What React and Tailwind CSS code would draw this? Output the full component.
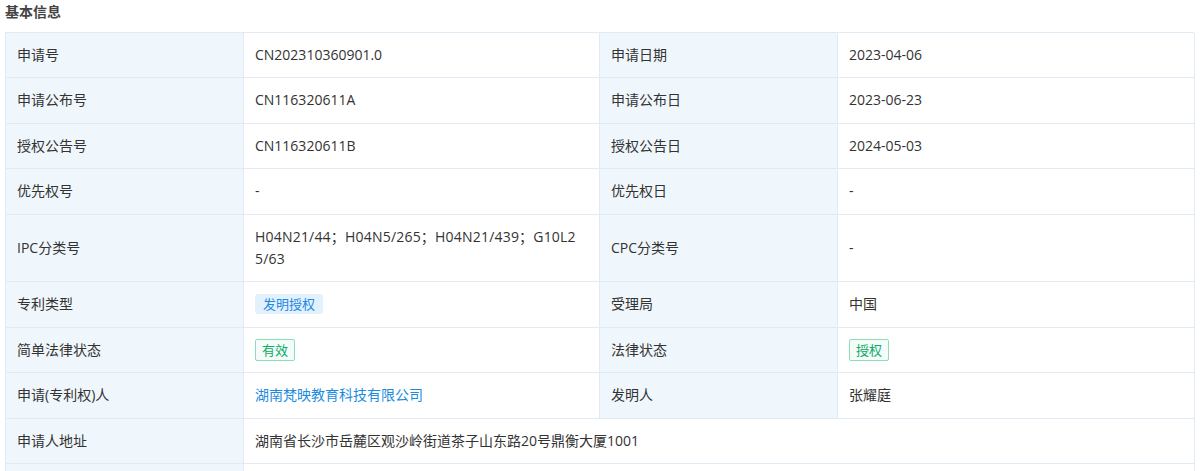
const rows = [
  [["申请号", "CN202310360901.0"], ["申请日期", "2023-04-06"]],
  [["申请公布号", "CN116320611A"], ["申请公布日", "2023-06-23"]],
  [["授权公告号", "CN116320611B"], ["授权公告日", "2024-05-03"]],
  [["优先权号", "-"], ["优先权日", "-"]],
  [["IPC分类号", "lines:H04N21/44；H04N5/265；H04N21/439；G10L2|5/63"], ["CPC分类号", "-"]],
  [["专利类型", "tag-blue:发明授权"], ["受理局", "中国"]],
  [["简单法律状态", "tag-green:有效"], ["法律状态", "tag-green:授权"]],
  [["申请(专利权)人", "link:湖南梵映教育科技有限公司"], ["发明人", "张耀庭"]],
];

function Value({ v }) {
  if (v.startsWith("tag-blue:")) {
    return (
      <span className="inline-block rounded-[3px] bg-[#e3f1fd] px-2 text-[13px] leading-[20px] text-[#1e88e5]">
        {v.slice(9)}
      </span>
    );
  }
  if (v.startsWith("tag-green:")) {
    return (
      <span className="inline-block rounded-[2px] border border-[#8fdcb7] bg-[#f3fcf8] px-[6px] text-[13px] leading-[20px] text-[#0fa968]">
        {v.slice(10)}
      </span>
    );
  }
  if (v.startsWith("link:")) {
    return <span className="text-[#1d8ce0]">{v.slice(5)}</span>;
  }
  if (v.startsWith("lines:")) {
    // IPC codes wrap mid-code in the original
    return v
      .slice(6)
      .split("|")
      .map((line) => (
        <div key={line} className="tracking-[0.2px]">
          {line}
        </div>
      ));
  }
  return <span className="break-all">{v}</span>;
}

const labelCls =
  "flex items-center border-r border-b border-[#e1ebf5] bg-[#f0f7fc] px-[11px] py-[11px] text-[#333]";
const valueCls =
  "flex items-center border-r border-b border-[#e1ebf5] bg-white px-[11px] py-[11px] text-[#333]";

export default function App() {
  return (
    <div
      className="h-screen overflow-hidden bg-white px-[5px] pt-[2px] text-[14px] leading-[22.4px]"
      style={{ fontFamily: '"Open Sans", "Noto Sans CJK SC", sans-serif' }}
    >
      <div className="font-bold text-[#444] leading-[20px]">基本信息</div>
      <div className="mt-[10px] grid w-[1189px] grid-cols-[238px_356px_238px_357px] border-t border-l border-[#e1ebf5]">
        {rows.map((row, i) =>
          row.map(([label, value], j) => (
            <div key={`${i}-${j}`} className="contents">
              <div className={labelCls}>{label}</div>
              <div className={valueCls}>
                <div>
                  <Value v={value} />
                </div>
              </div>
            </div>
          ))
        )}
        <div className={labelCls}>申请人地址</div>
        <div className={`${valueCls} col-span-3`}>湖南省长沙市岳麓区观沙岭街道茶子山东路20号鼎衡大厦1001</div>
        <div className={labelCls}>&nbsp;</div>
        <div className={`${valueCls} col-span-3`}>&nbsp;</div>
      </div>
    </div>
  );
}
